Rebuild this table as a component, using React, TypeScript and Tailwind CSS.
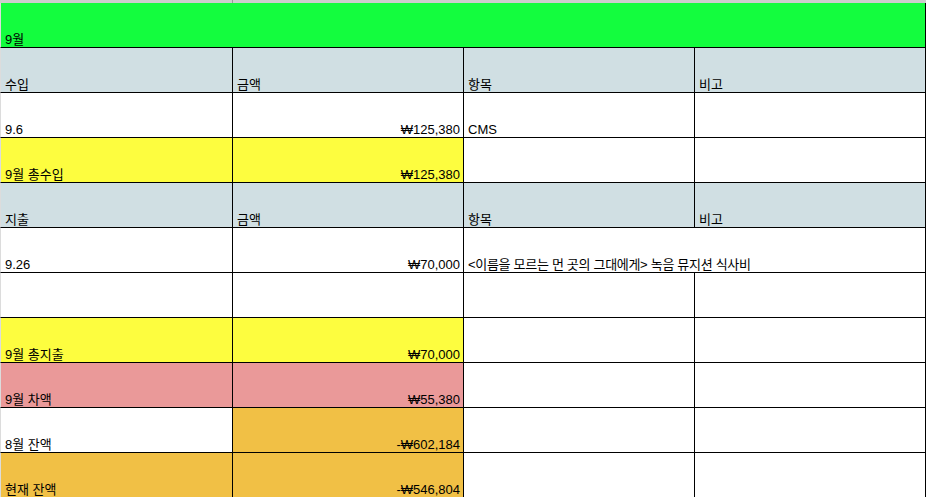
import React from "react";

type Cell = {
  text?: string;
  bg?: string;
  right?: boolean;
  noBorder?: boolean;
  overflow?: boolean;
};

const HEAD = "bg-[#d0dfe3]";
const YELLOW = "bg-[#fdfd3f]";
const PINK = "bg-[#ea9999]";
const ORANGE = "bg-[#f1c045]";

const widths = ["w-[233px] border-l border-l-[#dcdcdc]", "w-[231px]", "w-[231px]", "w-[231px]"];

const rows: Cell[][] = [
  [
    { text: "수입", bg: HEAD },
    { text: "금액", bg: HEAD },
    { text: "항목", bg: HEAD },
    { text: "비고", bg: HEAD },
  ],
  [{ text: "9.6" }, { text: "₩125,380", right: true }, { text: "CMS" }, {}],
  [
    { text: "9월 총수입", bg: YELLOW },
    { text: "₩125,380", right: true, bg: YELLOW },
    {},
    {},
  ],
  [
    { text: "지출", bg: HEAD },
    { text: "금액", bg: HEAD },
    { text: "항목", bg: HEAD },
    { text: "비고", bg: HEAD },
  ],
  [
    { text: "9.26" },
    { text: "₩70,000", right: true },
    { text: "<이름을 모르는 먼 곳의 그대에게> 녹음 뮤지션 식사비", noBorder: true, overflow: true },
    {},
  ],
  [{}, {}, {}, {}],
  [
    { text: "9월 총지출", bg: YELLOW },
    { text: "₩70,000", right: true, bg: YELLOW },
    {},
    {},
  ],
  [
    { text: "9월 차액", bg: PINK },
    { text: "₩55,380", right: true, bg: PINK },
    {},
    {},
  ],
  [{ text: "8월 잔액" }, { text: "-₩602,184", right: true, bg: ORANGE }, {}, {}],
  [
    { text: "현재 잔액", bg: ORANGE },
    { text: "-₩546,804", right: true, bg: ORANGE },
    {},
    {},
  ],
];

function SheetCell({ cell, idx }: { cell: Cell; idx: number }) {
  return (
    <div
      className={`flex h-[45px] shrink-0 items-end border-b border-black ${widths[idx]} ${
        cell.noBorder ? "" : "border-r border-r-black"
      } ${cell.bg ?? ""} ${cell.right ? "justify-end pr-[3px]" : "pl-1"} ${
        cell.overflow ? "relative z-10 overflow-visible" : ""
      }`}
    >
      {cell.text && (
        <span
          className={`whitespace-nowrap text-[13px] leading-[15px] text-black ${
            cell.overflow ? "tracking-[-0.3px]" : ""
          }`}
        >
          {cell.text}
        </span>
      )}
    </div>
  );
}

export default function App() {
  return (
    <div
      className="h-[497px] w-[927px] overflow-hidden bg-white"
      style={{ fontFamily: '"Liberation Sans", "Noto Sans CJK KR", sans-serif' }}
    >
      <div className="flex h-[3px] w-[926px] bg-[#cdcdcd]">
        <div className="h-full w-[233px] border-r border-r-[#9a9a9a]" />
      </div>
      <div className="flex h-[45px] w-[926px] items-end border-b border-l border-r border-b-black border-l-[#dcdcdc] border-r-black bg-[#13fd3e] pl-1">
        <span className="text-[13px] leading-[15px] text-black">9월</span>
      </div>
      {rows.map((row, r) => (
        <div key={r} className="flex w-[926px]">
          {row.map((cell, c) => (
            <SheetCell key={c} cell={cell} idx={c} />
          ))}
        </div>
      ))}
    </div>
  );
}
